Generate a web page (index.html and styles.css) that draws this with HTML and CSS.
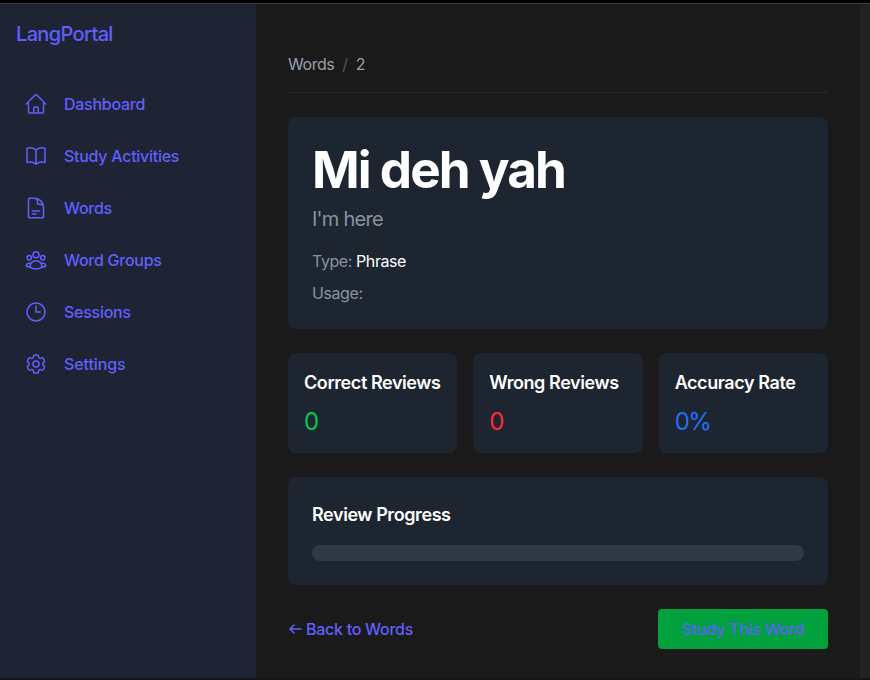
FILE: index.html
```html
<!DOCTYPE html>
<html lang="en">
<head>
<meta charset="utf-8">
<title>LangPortal</title>
<link rel="stylesheet" href="styles.css">
</head>
<body>
<div class="app">
  <aside class="sidebar">
    <a class="brand">LangPortal</a>
    <nav class="nav">
      <a class="nav-item"><svg class="icon" viewBox="0 0 24 24"><path d="M2.25 12l8.954-8.955c.44-.439 1.152-.439 1.591 0L21.75 12M4.5 9.75v10.125c0 .621.504 1.125 1.125 1.125H9.75v-4.875c0-.621.504-1.125 1.125-1.125h2.25c.621 0 1.125.504 1.125 1.125V21h4.125c.621 0 1.125-.504 1.125-1.125V9.75M8.25 21h8.25"/></svg><span>Dashboard</span></a>
      <a class="nav-item"><svg class="icon" viewBox="0 0 24 24"><path d="M12 6.042A8.967 8.967 0 006 3.75c-1.052 0-2.062.18-3 .512v14.25A8.987 8.987 0 016 18c2.305 0 4.408.867 6 2.292m0-14.25a8.966 8.966 0 016-2.292c1.052 0 2.062.18 3 .512v14.25A8.987 8.987 0 0018 18a8.967 8.967 0 00-6 2.292m0-14.25v14.25"/></svg><span>Study Activities</span></a>
      <a class="nav-item"><svg class="icon" viewBox="0 0 24 24"><path d="M19.5 14.25v-2.625a3.375 3.375 0 00-3.375-3.375h-1.5A1.125 1.125 0 0113.5 7.125v-1.5a3.375 3.375 0 00-3.375-3.375H8.25m0 12.75h7.5m-7.5 3H12M10.5 2.25H5.625c-.621 0-1.125.504-1.125 1.125v17.25c0 .621.504 1.125 1.125 1.125h12.75c.621 0 1.125-.504 1.125-1.125V11.25a9 9 0 00-9-9z"/></svg><span>Words</span></a>
      <a class="nav-item"><svg class="icon" viewBox="0 0 24 24"><path d="M18 18.72a9.094 9.094 0 003.741-.479 3 3 0 00-4.682-2.72m.94 3.198l.001.031c0 .225-.012.447-.037.666A11.944 11.944 0 0112 21c-2.17 0-4.207-.576-5.963-1.584A6.062 6.062 0 016 18.719m12 0a5.971 5.971 0 00-.941-3.197m0 0A5.995 5.995 0 0012 12.75a5.995 5.995 0 00-5.058 2.772m0 0a3 3 0 00-4.681 2.72 8.986 8.986 0 003.74.477m.94-3.197a5.971 5.971 0 00-.94 3.197M15 6.75a3 3 0 11-6 0 3 3 0 016 0zm6 3a2.25 2.25 0 11-4.5 0 2.25 2.25 0 014.5 0zm-13.5 0a2.25 2.25 0 11-4.5 0 2.25 2.25 0 014.5 0z"/></svg><span>Word Groups</span></a>
      <a class="nav-item"><svg class="icon" viewBox="0 0 24 24"><path d="M12 6v6h4.5m4.5 0a9 9 0 11-18 0 9 9 0 0118 0z"/></svg><span>Sessions</span></a>
      <a class="nav-item"><svg class="icon" viewBox="0 0 24 24"><path d="M9.594 3.94c.09-.542.56-.94 1.11-.94h2.593c.55 0 1.02.398 1.11.94l.213 1.281c.063.374.313.686.645.87.074.04.147.083.22.127.324.196.72.257 1.075.124l1.217-.456a1.125 1.125 0 011.37.49l1.296 2.247a1.125 1.125 0 01-.26 1.431l-1.003.827c-.293.24-.438.613-.431.992a6.759 6.759 0 010 .255c-.007.378.138.75.43.99l1.005.828c.424.35.534.954.26 1.43l-1.298 2.247a1.125 1.125 0 01-1.369.491l-1.217-.456c-.355-.133-.75-.072-1.076.124a6.57 6.57 0 01-.22.128c-.331.183-.581.495-.644.869l-.213 1.28c-.09.543-.56.941-1.11.941h-2.594c-.55 0-1.02-.398-1.11-.94l-.213-1.281c-.062-.374-.312-.686-.644-.87a6.52 6.52 0 01-.22-.127c-.325-.196-.72-.257-1.076-.124l-1.217.456a1.125 1.125 0 01-1.369-.49l-1.297-2.247a1.125 1.125 0 01.26-1.431l1.004-.827c.292-.24.437-.613.43-.992a6.932 6.932 0 010-.255c.007-.378-.138-.75-.43-.99l-1.004-.828a1.125 1.125 0 01-.26-1.43l1.297-2.247a1.125 1.125 0 011.37-.491l1.216.456c.356.133.751.072 1.076-.124.072-.044.146-.087.22-.128.332-.183.582-.495.644-.869l.214-1.281z"/><path d="M15 12a3 3 0 11-6 0 3 3 0 016 0z"/></svg><span class="settings">Settings</span></a>
    </nav>
  </aside>
  <main class="main">
    <div class="breadcrumb"><span>Words</span><span class="slash">/</span><span>2</span></div>
    <section class="card word">
      <h1>Mi deh yah</h1>
      <p class="translation">I'm here</p>
      <p class="meta">Type: <span class="value">Phrase</span></p>
      <p class="meta">Usage:</p>
    </section>
    <div class="stats">
      <section class="card stat"><h2>Correct Reviews</h2><p class="num green">0</p></section>
      <section class="card stat"><h2>Wrong Reviews</h2><p class="num red">0</p></section>
      <section class="card stat"><h2>Accuracy Rate</h2><p class="num blue">0%</p></section>
    </div>
    <section class="card progress"><h2>Review Progress</h2><div class="track"></div></section>
    <div class="actions">
      <a class="back"><svg class="arrow" viewBox="0 0 14 12"><path d="M13 6H2M6 2L2 6L6 10"/></svg>Back to Words</a>
      <a class="study">Study This Word</a>
    </div>
  </main>
  <div class="gutter"></div>
</div>
</body>
</html>
```
FILE: styles.css
```css
* { box-sizing: border-box; margin: 0; padding: 0; }
body {
  height: 680px;
  overflow: hidden;
  background: #1a1a1a;
  border-top: 3px solid #000;
  font: 400 16px/24px Inter, "Liberation Sans", sans-serif;
  letter-spacing: -0.27px;
  color: #fff;
}
.app { display: flex; height: 677px; border-top: 1px solid #3a3a3a; border-bottom: 2px solid #151417; }
.sidebar { width: 256px; background: #1e2433; color: #615fff; font-weight: 500; }
.brand { display: block; padding: 16px 16px 0; font-size: 20px; line-height: 28px; letter-spacing: -0.65px; }
.nav { display: flex; flex-direction: column; gap: 4px; padding: 32px 16px 0; }
.nav-item { display: flex; align-items: center; gap: 16px; height: 48px; padding: 0 8px; }
.settings { letter-spacing: -0.1px; }
.icon { width: 24px; height: 24px; fill: none; stroke: currentColor; stroke-width: 1.5; stroke-linecap: round; stroke-linejoin: round; }
.main { flex: 1; min-width: 0; padding: 48px 32px 0; }
.breadcrumb { display: flex; gap: 8px; height: 41px; border-bottom: 1px solid #1c2a3a; color: #99a1af; margin-bottom: 24px; letter-spacing: -0.45px; }
.slash { color: #4a5565; }
.card { background: #1c2530; border-radius: 8px; }
.word { height: 212px; padding: 24px; }
h1 { font-size: 51.2px; line-height: 56px; font-weight: 700; letter-spacing: -1.95px; margin-bottom: 8px; }
.translation { font-size: 20px; line-height: 28px; color: #8a92a0; margin-bottom: 16px; letter-spacing: -0.75px; }
.meta { color: #8a92a0; margin-bottom: 8px; letter-spacing: -0.42px; }
.value { color: #fff; }
.stats { display: grid; grid-template-columns: repeat(3, minmax(0, 1fr)); gap: 16px; margin: 24px 0; }
.stat { height: 100px; padding: 16px; white-space: nowrap; }
h2 { font-size: 18px; line-height: 28px; font-weight: 600; letter-spacing: -0.42px; }
.num { font-size: 24px; line-height: 32px; margin-top: 9px; letter-spacing: -1.5px; }
.green { color: #00c950; }
.red { color: #fb2c36; }
.blue { color: #246efa; }
.progress { height: 108px; padding: 24px; }
.track { height: 16px; margin-top: 16px; border-radius: 8px; background: #303846; }
.actions { display: flex; justify-content: space-between; align-items: center; margin-top: 24px; color: #615fff; font-weight: 500; }
.back { display: flex; align-items: center; gap: 4px; }
.arrow { width: 14px; height: 12px; fill: none; stroke: currentColor; stroke-width: 1.5; stroke-linecap: round; }
.study { width: 170px; height: 40px; line-height: 40px; text-align: center; border-radius: 4px; background: #00a03c; }
.gutter { width: 10px; background: #222; }
```
